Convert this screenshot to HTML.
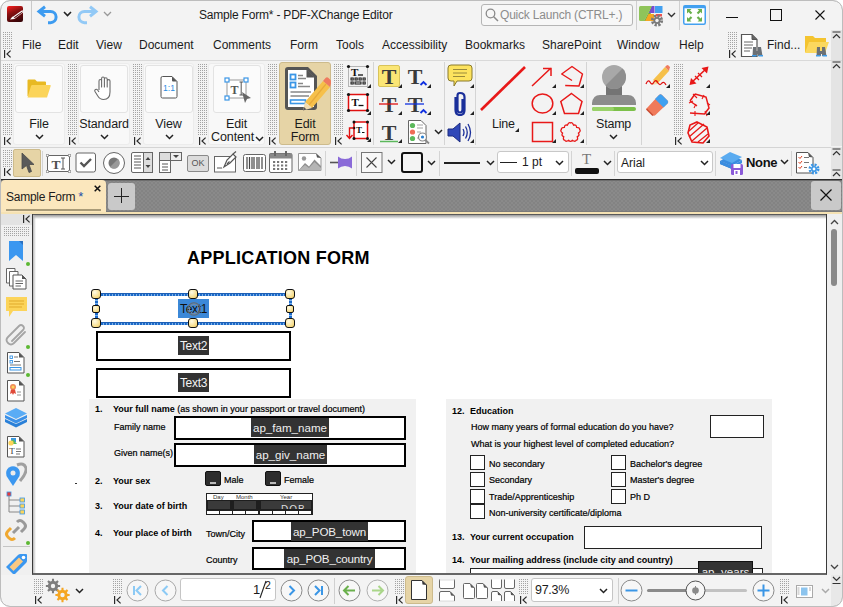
<!DOCTYPE html>
<html><head><meta charset="utf-8">
<style>
*{margin:0;padding:0;box-sizing:border-box}
html,body{width:843px;height:607px;overflow:hidden;background:#fff}
body{font-family:"Liberation Sans",sans-serif;font-size:12px;color:#1a1a1a;position:relative}
.a{position:absolute}
.win{left:0;top:0;width:843px;height:607px;background:#f3f3f3;border:1px solid #bdbdbd;border-radius:8px;overflow:hidden}
.grip{position:absolute;width:10px;background-image:conic-gradient(from 270deg at 1px 1px,#a3a3a3 90deg,transparent 0);background-size:2px 2px}
.kk{position:absolute;width:8px;height:8px}
.sep{position:absolute;width:1px;background:#d6d6d6}
.menu span{position:absolute;top:38px;font-size:12px;color:#1b1b1b;white-space:nowrap}
.rbtn{position:absolute;background:#fbfbfb;border:1px solid #e3e3e3;border-radius:3px}
.rlab{position:absolute;text-align:center;font-size:12.5px;color:#1b1b1b;line-height:13px}
.tb{position:absolute;top:148px;height:31px}
.t9{font-size:9px;color:#000;-webkit-text-stroke:0.2px #000;white-space:nowrap;line-height:11px;margin-top:1px}
.b,.t9 b{font-weight:bold;-webkit-text-stroke:0}
.box{border:2px solid #000;background:#fff}
.cb{width:15px;height:15px;border:1.5px solid #222;background:#fff}
.lbl{background:#333;color:#f4f4f4;font-size:12px;line-height:21px;text-align:center;letter-spacing:-0.3px}
.lbl2{background:#333;color:#f0f0f0;font-size:11.6px;line-height:19px;text-align:center;white-space:nowrap;letter-spacing:0px}
.hd{width:10px;height:10px;border:1.3px solid #111;border-radius:3px;background:radial-gradient(circle at 35% 30%,#fffbe5,#f7dc86 70%,#e9c45a)}
.hs{width:8px;height:8px;border-radius:2px}
</style></head><body>
<div class="a win"></div>
<!-- ===== TITLE BAR ===== -->
<div id="title">
<!-- app icon -->
<svg class="a" style="left:7px;top:6px" width="17" height="17" viewBox="0 0 17 17">
<defs><linearGradient id="ag" x1="0.2" y1="0" x2="0.6" y2="1"><stop offset="0" stop-color="#f01e1e"/><stop offset="0.4" stop-color="#8a1010"/><stop offset="1" stop-color="#3a0508"/></linearGradient></defs>
<rect x="0" y="0" width="16" height="16" rx="2" fill="url(#ag)"/>
<path d="M5.5 11 L15.5 4 L16 6.5 L7.5 13 Z" fill="#fff"/>
<path d="M7 11.3 L15 5.7 L15.3 6.6 L7.6 12.2 Z" fill="#5a0a0e"/>
<path d="M3 13.5 L5.5 10.5 L7.5 13 Z" fill="#fff"/>
</svg>
<div class="sep" style="left:31px;top:1px;height:29px;background:#c9c9c9"></div>
<!-- undo -->
<svg class="a" style="left:36px;top:5px" width="23" height="21" viewBox="0 0 23 21">
<path d="M9 1.8 L3 6.5 L9 11.2" fill="none" stroke="#3d9bf0" stroke-width="3" stroke-linejoin="miter" stroke-linecap="butt"/>
<path d="M3.5 6.5 H14.5 A5.6 5.6 0 0 1 14.5 17.7 H12" fill="none" stroke="#3d9bf0" stroke-width="3"/>
</svg>
<svg class="a" style="left:63px;top:11px" width="9" height="6" viewBox="0 0 9 6"><path d="M1 1 L4.5 4.5 L8 1" fill="none" stroke="#222" stroke-width="1.6"/></svg>
<svg class="a" style="left:76px;top:5px" width="23" height="21" viewBox="0 0 23 21">
<path d="M14 1.8 L20 6.5 L14 11.2" fill="none" stroke="#92c9f6" stroke-width="3" stroke-linejoin="miter" stroke-linecap="butt"/>
<path d="M19.5 6.5 H8.5 A5.6 5.6 0 0 0 8.5 17.7 H11" fill="none" stroke="#92c9f6" stroke-width="3"/>
</svg>
<svg class="a" style="left:103px;top:11px" width="9" height="6" viewBox="0 0 9 6"><path d="M1 1 L4.5 4.5 L8 1" fill="none" stroke="#999" stroke-width="1.3"/></svg>
<div class="a" style="left:199px;top:8px;font-size:12px;letter-spacing:-0.2px;color:#1b1b1b;white-space:nowrap">Sample Form* - PDF-XChange Editor</div>
<!-- quick launch -->
<div class="a" style="left:481px;top:4px;width:152px;height:22px;border:1px solid #b5b5b5;border-radius:3px;background:#f7f7f7"></div>
<svg class="a" style="left:485px;top:8px" width="14" height="14" viewBox="0 0 14 14"><circle cx="5.5" cy="5.5" r="4.3" fill="none" stroke="#8a8a8a" stroke-width="1.3"/><path d="M8.7 8.7 L13 13" stroke="#8a8a8a" stroke-width="1.5"/></svg>
<div class="a" style="left:500px;top:8px;font-size:12px;letter-spacing:-0.2px;color:#8c8c8c;white-space:nowrap">Quick Launch (CTRL+.)</div>
<div class="sep" style="left:636px;top:1px;height:29px;background:#d0d0d0"></div>
<svg class="a" style="left:638px;top:5px" width="30" height="23" viewBox="0 0 30 23">
<path d="M2.5 1 H14 L6 16 H2.5 Q1 16 1 14.5 V2.5 Q1 1 2.5 1 Z" fill="#8fc45a"/>
<path d="M14 1 L6 16 H9 L14 6 Z" fill="#6fae3a"/>
<path d="M14 1 H16.5 V8 H11 Z" fill="#7a4ad0"/>
<rect x="17" y="1" width="7.5" height="7" fill="#42a0f0"/>
<path d="M10.5 9 H16 V16 H7 Z" fill="#f5a623"/>
<rect x="18" y="9" width="6" height="2.5" fill="#ef5350"/>
<g transform="translate(19 15.5)"><circle r="4.6" fill="none" stroke="#7a7a7a" stroke-width="3" stroke-dasharray="2.2 1.4"/><circle r="3.5" fill="#7a7a7a"/><circle r="1.7" fill="#f3f3f3"/></g>
</svg>
<svg class="a" style="left:667px;top:12px" width="9" height="6" viewBox="0 0 9 6"><path d="M1 1 L4.5 4.5 L8 1" fill="none" stroke="#333" stroke-width="1.4"/></svg>
<div class="sep" style="left:679px;top:1px;height:29px;background:#d0d0d0"></div>
<svg class="a" style="left:683px;top:5px" width="23" height="20" viewBox="0 0 23 20">
<rect x="0.75" y="0.75" width="21.5" height="18.5" rx="1.5" fill="#fff" stroke="#42a0f0" stroke-width="1.5"/>
<rect x="0.75" y="0.75" width="21.5" height="2.5" fill="#42a0f0"/>
<path d="M8.5 8.5 L5 5 M14.5 8.5 L18 5 M8.5 12 L5 15.5 M14.5 12 L18 15.5" stroke="#6ab04c" stroke-width="2.2"/>
<path d="M4 4 H8.5 L4 8.5 Z M19 4 H14.5 L19 8.5 Z M4 16.5 H8.5 L4 12 Z M19 16.5 H14.5 L19 12 Z" fill="#6ab04c"/>
</svg>
<div class="sep" style="left:709px;top:1px;height:29px;background:#d0d0d0"></div>
<div class="a" style="left:726px;top:17px;width:12px;height:1px;background:#111"></div>
<div class="a" style="left:770px;top:9px;width:12px;height:12px;border:1px solid #111"></div>
<svg class="a" style="left:815px;top:10px" width="10" height="10" viewBox="0 0 10 10"><path d="M0.5 0.5 L9.5 9.5 M9.5 0.5 L0.5 9.5" stroke="#111" stroke-width="1.1"/></svg>
</div>
<!-- ===== MENU BAR ===== -->
<div id="menubar" class="menu">
<div class="grip" style="left:3px;top:32px;height:17px"></div>
<svg class="kk" style="left:4px;top:50px" viewBox="0 0 8 8"><path d="M0.6 0 V8 M6.6 0.6 L3 4 L6.6 7.4" fill="none" stroke="#2a2a2a" stroke-width="1.2"/></svg>
<span style="left:22px">File</span><span style="left:58px">Edit</span><span style="left:96px">View</span><span style="left:139px">Document</span><span style="left:213px">Comments</span><span style="left:290px">Form</span><span style="left:336px">Tools</span><span style="left:382px">Accessibility</span><span style="left:465px">Bookmarks</span><span style="left:542px">SharePoint</span><span style="left:617px">Window</span><span style="left:679px">Help</span>
<div class="grip" style="left:728px;top:32px;height:17px"></div>
<svg class="kk" style="left:729px;top:50px" viewBox="0 0 8 8"><path d="M0.6 0 V8 M6.6 0.6 L3 4 L6.6 7.4" fill="none" stroke="#2a2a2a" stroke-width="1.2"/></svg>
<svg class="a" style="left:740px;top:33px" width="26" height="25" viewBox="0 0 26 25">
<path d="M1.5 1.5 H12 L17 6.5 V23.5 H1.5 Z" fill="#fff" stroke="#555" stroke-width="1.2"/>
<path d="M12 1.5 V6.5 H17" fill="#666" stroke="#555"/>
<path d="M4 9 H13 M4 12 H13 M4 15 H12 M4 18 H10" stroke="#666" stroke-width="1"/>
<path d="M13 14 h3 v4 h2 v-4 h3 l1.5 9 h-4.5 v-2 h-1 v2 h-4.5 z" fill="#6b7075"/>
<rect x="12" y="22" width="4.5" height="1.5" fill="#3f9be8"/><rect x="18.5" y="22" width="4.5" height="1.5" fill="#3f9be8"/>
</svg>
<span style="left:767px">Find...</span>
<svg class="a" style="left:804px;top:33px" width="26" height="25" viewBox="0 0 26 25">
<path d="M1 3 H9 L11 5 H22 V19 H1 Z" fill="#f4c430"/>
<path d="M1 20 L5 9 H25 L21 20 Z" fill="#fbd85f"/>
<path d="M13 14 h3 v4 h2 v-4 h3 l1.5 9 h-4.5 v-2 h-1 v2 h-4.5 z" fill="#6b7075"/>
<rect x="12" y="22" width="4.5" height="1.5" fill="#3f9be8"/><rect x="18.5" y="22" width="4.5" height="1.5" fill="#3f9be8"/>
</svg>
<div class="a" style="left:831px;top:30px;width:11px;height:30px;background:#e4e4e4"></div>
<svg class="a" style="left:832px;top:31px" width="9" height="8" viewBox="0 0 9 8"><path d="M0.5 1 H8.5 M1 7 L4.5 3.5 L8 7" fill="none" stroke="#333" stroke-width="1.2"/></svg>
</div>
<!-- line under menu -->
<div class="a" style="left:1px;top:60px;width:841px;height:1px;background:#d9d9d9"></div>
<!-- ===== RIBBON ===== -->
<div id="ribbon">
<div class="grip" style="left:3px;top:64px;height:71px"></div><svg class="kk" style="left:4px;top:137px" viewBox="0 0 8 8"><path d="M0.6 0 V8 M6.6 0.6 L3 4 L6.6 7.4" fill="none" stroke="#2a2a2a" stroke-width="1.2"/></svg>
<div class="grip" style="left:68px;top:64px;height:71px"></div><svg class="kk" style="left:69px;top:137px" viewBox="0 0 8 8"><path d="M0.6 0 V8 M6.6 0.6 L3 4 L6.6 7.4" fill="none" stroke="#2a2a2a" stroke-width="1.2"/></svg>
<div class="grip" style="left:133px;top:64px;height:71px"></div><svg class="kk" style="left:134px;top:137px" viewBox="0 0 8 8"><path d="M0.6 0 V8 M6.6 0.6 L3 4 L6.6 7.4" fill="none" stroke="#2a2a2a" stroke-width="1.2"/></svg>
<div class="grip" style="left:198px;top:64px;height:71px"></div><svg class="kk" style="left:199px;top:137px" viewBox="0 0 8 8"><path d="M0.6 0 V8 M6.6 0.6 L3 4 L6.6 7.4" fill="none" stroke="#2a2a2a" stroke-width="1.2"/></svg>
<div class="grip" style="left:268px;top:64px;height:71px"></div><svg class="kk" style="left:269px;top:137px" viewBox="0 0 8 8"><path d="M0.6 0 V8 M6.6 0.6 L3 4 L6.6 7.4" fill="none" stroke="#2a2a2a" stroke-width="1.2"/></svg>
<div class="grip" style="left:334px;top:64px;height:71px"></div><svg class="kk" style="left:335px;top:137px" viewBox="0 0 8 8"><path d="M0.6 0 V8 M6.6 0.6 L3 4 L6.6 7.4" fill="none" stroke="#2a2a2a" stroke-width="1.2"/></svg>
<div class="grip" style="left:674px;top:64px;height:71px"></div><svg class="kk" style="left:675px;top:137px" viewBox="0 0 8 8"><path d="M0.6 0 V8 M6.6 0.6 L3 4 L6.6 7.4" fill="none" stroke="#2a2a2a" stroke-width="1.2"/></svg>
<div class="a" style="left:13px;top:63px;width:52px;height:82px;background:#f8f8f8;border:1px solid #ececec;border-radius:3px"></div><div class="rbtn" style="left:15px;top:65px;width:48px;height:48px"></div><svg class="a" style="left:27px;top:79px" width="24" height="19" viewBox="0 0 24 19">
<path d="M0.5 1.5 Q0.5 0.5 1.5 0.5 H8 L10 2.5 H18 Q19 2.5 19 3.5 V17 H0.5 Z" fill="#e8b923"/>
<path d="M0.5 18.5 L4 7 Q4.3 6 5.3 6 H23 Q24 6 23.7 7 L20 18.5 Z" fill="#fbd45a"/>
</svg><div class="rlab" style="left:13px;top:118px;width:52px;letter-spacing:-0.15px">File</div><svg class="a" style="left:35px;top:134px" width="9" height="6" viewBox="0 0 9 6"><path d="M1 1 L4.5 4.5 L8 1" fill="none" stroke="#222" stroke-width="1.5"/></svg><div class="a" style="left:78px;top:63px;width:52px;height:82px;background:#f8f8f8;border:1px solid #ececec;border-radius:3px"></div><div class="rbtn" style="left:80px;top:65px;width:48px;height:48px"></div><svg class="a" style="left:94px;top:76px" width="20" height="25" viewBox="0 0 20 25">
<path d="M5 14 V5 Q5 3.5 6.3 3.5 Q7.6 3.5 7.6 5 V11 V2.5 Q7.6 1 9 1 Q10.4 1 10.4 2.5 V11 V3.2 Q10.4 1.8 11.8 1.8 Q13.2 1.8 13.2 3.2 V11 V5 Q13.2 3.6 14.6 3.6 Q16 3.6 16 5 V16 Q16 23.5 9.5 23.5 Q6 23.5 3.8 20 L1 15.5 Q0.3 14 1.5 13.4 Q2.7 12.8 3.6 14 L5 16" fill="#fff" stroke="#6b6b6b" stroke-width="1.1" stroke-linejoin="round"/>
</svg><div class="rlab" style="left:78px;top:118px;width:52px;letter-spacing:-0.15px">Standard</div><svg class="a" style="left:100px;top:134px" width="9" height="6" viewBox="0 0 9 6"><path d="M1 1 L4.5 4.5 L8 1" fill="none" stroke="#222" stroke-width="1.5"/></svg><div class="a" style="left:143px;top:63px;width:51px;height:82px;background:#f8f8f8;border:1px solid #ececec;border-radius:3px"></div><div class="rbtn" style="left:145px;top:65px;width:48px;height:48px"></div><svg class="a" style="left:160px;top:76px" width="18" height="23" viewBox="0 0 18 23">
<path d="M2.5 0.5 H12 L17 5.5 V20.5 Q17 22 15.5 22 H2.5 Q1 22 1 20.5 V2 Q1 0.5 2.5 0.5 Z" fill="#fff" stroke="#555" stroke-width="1"/>
<path d="M12 0.5 L17 5.5 H13 Q12 5.5 12 4.5 Z" fill="#555"/>
<text x="9" y="14.5" font-family="Liberation Sans" font-size="8.5" fill="#2a8ae0" text-anchor="middle">1:1</text>
</svg><div class="rlab" style="left:143px;top:118px;width:51px;letter-spacing:-0.15px">View</div><svg class="a" style="left:165px;top:134px" width="9" height="6" viewBox="0 0 9 6"><path d="M1 1 L4.5 4.5 L8 1" fill="none" stroke="#222" stroke-width="1.5"/></svg><div class="a" style="left:208px;top:63px;width:57px;height:82px;background:#f8f8f8;border:1px solid #ececec;border-radius:3px"></div><div class="rbtn" style="left:213px;top:65px;width:48px;height:48px"></div><svg class="a" style="left:224px;top:77px" width="30" height="26" viewBox="0 0 30 26">
<rect x="3" y="3" width="19" height="18" fill="#fff" stroke="#9a9a9a" stroke-width="1"/>
<rect x="1" y="1" width="4" height="4" fill="#fff" stroke="#3a96e6" stroke-width="1.2"/>
<rect x="20" y="1" width="4" height="4" fill="#fff" stroke="#3a96e6" stroke-width="1.2"/>
<rect x="1" y="19" width="4" height="4" fill="#fff" stroke="#3a96e6" stroke-width="1.2"/>
<text x="10.5" y="17" font-family="Liberation Serif" font-weight="bold" font-size="12" fill="#555" text-anchor="middle">T</text>
<path d="M15.5 5 H19 M17.2 5 V18 M15.5 18 H19" stroke="#555" stroke-width="1"/>
<path d="M18 15 L27 21 L23 22 L21 26 Z" fill="#666"/>
</svg><div class="rlab" style="left:208px;top:118px;width:57px;letter-spacing:-0.15px">Edit</div><div class="rlab" style="left:211px;top:131px;white-space:nowrap;letter-spacing:-0.1px">Content</div><svg class="a" style="left:255px;top:136px" width="9" height="6" viewBox="0 0 9 6"><path d="M1 1 L4.5 4.5 L8 1" fill="none" stroke="#222" stroke-width="1.5"/></svg><div class="a" style="left:279px;top:62px;width:52px;height:83px;background:#e6d4a6;border:1px solid #cdbb8c;border-radius:3px"></div><svg class="a" style="left:283px;top:66px" width="48" height="46" viewBox="0 0 48 46">
<path d="M2 4 Q2 1 5 1 H25 L34 10 V41 Q34 44 31 44 H5 Q2 44 2 41 Z" fill="#555"/>
<path d="M5 4 H24 L31 11 V41 H5 Z" fill="#fff"/>
<path d="M23.5 3 L32 11.5 H23.5 Z" fill="#555"/>
<rect x="7.5" y="8.5" width="5" height="5" fill="none" stroke="#3a96e6" stroke-width="1.8"/>
<rect x="7.5" y="16.5" width="5" height="5" fill="none" stroke="#3a96e6" stroke-width="1.8"/>
<path d="M15 9.5 H20 M15 12.5 H23 M15 17.5 H20 M15 20.5 H27 M7.5 26 H28 M7.5 30 H26" stroke="#888" stroke-width="1.6"/>
<rect x="7.5" y="34" width="15" height="3.5" fill="none" stroke="#3a96e6" stroke-width="1.6"/>
<path d="M22 36 L40 15 L47 21 L29 42 Z" fill="#f6c04a"/>
<path d="M26 39 L43 18" stroke="#e8a93a" stroke-width="1.2"/>
<path d="M40 15 L42.5 12 Q44 10.5 45.5 12 L48 14.5 Q49.5 16 48 17.5 L47 21 Z" fill="#ef7b5f"/>
<path d="M22 36 L29 42 L20 44.5 Z" fill="#f2dcb0"/><path d="M20 44.5 L21 41 L23.5 43.5 Z" fill="#555"/>
</svg><div class="rlab" style="left:279px;top:118px;width:52px;letter-spacing:-0.15px">Edit</div><div class="rlab" style="left:279px;top:131px;width:52px;letter-spacing:-0.15px">Form</div>
<svg class="a" style="left:346px;top:64px" width="25" height="25" viewBox="0 0 25 25">
<rect x="2.5" y="2.5" width="19" height="20" fill="none" stroke="#555" stroke-width="0.8" stroke-dasharray="1 1"/>
<circle cx="2.5" cy="2.5" r="1.6" fill="#111"/><circle cx="21.5" cy="2.5" r="1.6" fill="#111"/>
<text x="5" y="12" font-family="Liberation Serif" font-weight="bold" font-size="11" fill="#111">T</text><path d="M12 11 H17" stroke="#111" stroke-width="1.3"/>
<g fill="none" stroke="#111" stroke-width="1"><rect x="5" y="14" width="2.2" height="2"/><rect x="9" y="14" width="2.2" height="2"/><rect x="13" y="14" width="2.2" height="2"/><rect x="17" y="14" width="2.2" height="2"/><rect x="5" y="18" width="2.2" height="2"/><rect x="9" y="18" width="6" height="2"/><rect x="17" y="18" width="2.2" height="2"/></g>
</svg><svg class="a" style="left:367px;top:84px" width="4" height="4" viewBox="0 0 4 4"><path d="M4 0 V4 H0 Z" fill="#222"/></svg><svg class="a" style="left:346px;top:92px" width="25" height="22" viewBox="0 0 25 22">
<rect x="2.5" y="2.5" width="19" height="16" fill="#fff" stroke="#e01010" stroke-width="1.5"/>
<circle cx="2.5" cy="2.5" r="1.6" fill="#111"/><circle cx="21.5" cy="2.5" r="1.6" fill="#111"/><circle cx="2.5" cy="18.5" r="1.6" fill="#111"/><circle cx="21.5" cy="18.5" r="1.6" fill="#111"/>
<text x="5.5" y="14" font-family="Liberation Serif" font-weight="bold" font-size="11" fill="#111">T</text><path d="M12.5 13.5 H17.5" stroke="#111" stroke-width="1.3"/>
</svg><svg class="a" style="left:367px;top:111px" width="4" height="4" viewBox="0 0 4 4"><path d="M4 0 V4 H0 Z" fill="#222"/></svg><svg class="a" style="left:345px;top:120px" width="26" height="22" viewBox="0 0 26 22">
<rect x="9" y="2" width="13.5" height="16.5" fill="#fff" stroke="#e01010" stroke-width="1.5"/>
<circle cx="9" cy="2" r="1.5" fill="#111"/><circle cx="22.5" cy="2" r="1.5" fill="#111"/><circle cx="9" cy="18.5" r="1.5" fill="#111"/><circle cx="22.5" cy="18.5" r="1.5" fill="#111"/><circle cx="9" cy="8" r="1.3" fill="#111"/>
<text x="11" y="13" font-family="Liberation Serif" font-weight="bold" font-size="9" fill="#111">T</text><path d="M17 12.5 H19.5" stroke="#111" stroke-width="1"/>
<path d="M8.5 8 H4.5 V18 M1.5 15 L4.5 18.5 L7.5 15" fill="none" stroke="#e01010" stroke-width="1.4"/>
</svg><svg class="a" style="left:367px;top:138px" width="4" height="4" viewBox="0 0 4 4"><path d="M4 0 V4 H0 Z" fill="#222"/></svg><div class="sep" style="left:373px;top:62px;height:83px;background:#d4d4d4"></div><div class="a" style="left:378px;top:65px;width:22px;height:22px;background:#fbe675;border:1px solid #d8c35a;border-radius:2px"></div>
<svg class="a" style="left:378px;top:65px" width="22" height="22" viewBox="0 0 22 22"><text x="11" y="19" font-family="Liberation Serif" font-size="22" fill="#3a3a3a" text-anchor="middle" font-weight="bold">T</text></svg><svg class="a" style="left:398px;top:84px" width="4" height="4" viewBox="0 0 4 4"><path d="M4 0 V4 H0 Z" fill="#222"/></svg><svg class="a" style="left:378px;top:93px" width="22" height="22" viewBox="0 0 22 22"><text x="11" y="19" font-family="Liberation Serif" font-size="22" fill="#3a3a3a" text-anchor="middle" font-weight="bold">T</text><path d="M1 11 H20" stroke="#e01010" stroke-width="1.3"/></svg><svg class="a" style="left:398px;top:111px" width="4" height="4" viewBox="0 0 4 4"><path d="M4 0 V4 H0 Z" fill="#222"/></svg><svg class="a" style="left:378px;top:121px" width="22" height="22" viewBox="0 0 22 22"><text x="11" y="19" font-family="Liberation Serif" font-size="22" fill="#3a3a3a" text-anchor="middle" font-weight="bold">T</text><path d="M2 20.5 H20" stroke="#5cb85c" stroke-width="1.5"/></svg><svg class="a" style="left:398px;top:139px" width="4" height="4" viewBox="0 0 4 4"><path d="M4 0 V4 H0 Z" fill="#222"/></svg><svg class="a" style="left:405px;top:65px" width="24" height="22" viewBox="0 0 24 22"><text x="10" y="19" font-family="Liberation Serif" font-size="22" fill="#3a3a3a" text-anchor="middle" font-weight="bold">T</text><path d="M15.5 20 L18.5 17 L21.5 20" fill="none" stroke="#1030e0" stroke-width="1.8"/></svg><svg class="a" style="left:427px;top:84px" width="4" height="4" viewBox="0 0 4 4"><path d="M4 0 V4 H0 Z" fill="#222"/></svg><svg class="a" style="left:405px;top:93px" width="24" height="22" viewBox="0 0 24 22"><text x="10" y="19" font-family="Liberation Serif" font-size="22" fill="#3a3a3a" text-anchor="middle" font-weight="bold">T</text><path d="M0 11 H19" stroke="#1030e0" stroke-width="1.3"/><path d="M15.5 20 L18.5 17 L21.5 20" fill="none" stroke="#1030e0" stroke-width="1.8"/></svg><svg class="a" style="left:427px;top:111px" width="4" height="4" viewBox="0 0 4 4"><path d="M4 0 V4 H0 Z" fill="#222"/></svg><svg class="a" style="left:407px;top:120px" width="24" height="25" viewBox="0 0 24 25">
<path d="M1.5 0.5 H14 L19 5.5 V23.5 H1.5 Z" fill="#fff" stroke="#666" stroke-width="1"/>
<circle cx="5.5" cy="5.5" r="2.6" fill="#5cb85c"/><circle cx="5.5" cy="12" r="2.6" fill="#ef6c57"/><circle cx="5.5" cy="18.5" r="2.6" fill="#5cb85c"/>
<path d="M10 5 H16 M10 8 H16 M10 12 H14 M10 18 H12" stroke="#999" stroke-width="0.9"/>
<circle cx="15.5" cy="17" r="4" fill="#fff" stroke="#888" stroke-width="1.2"/><circle cx="15.5" cy="17" r="1.6" fill="#2a7fd0"/>
<path d="M18.3 19.8 L22 23.5" stroke="#888" stroke-width="1.8"/>
</svg><svg class="a" style="left:434px;top:129px" width="9" height="6" viewBox="0 0 9 6"><path d="M1 1 L4.5 4.5 L8 1" fill="none" stroke="#222" stroke-width="1.5"/></svg><div class="sep" style="left:444px;top:62px;height:83px;background:#d4d4d4"></div><svg class="a" style="left:447px;top:64px" width="26" height="24" viewBox="0 0 26 24">
<path d="M4 1 H22 Q25 1 25 4 V14 Q25 17 22 17 H10 L7 22 L7 17 H4 Q1 17 1 14 V4 Q1 1 4 1 Z" fill="#fde35e" stroke="#8a7a2a" stroke-width="1"/>
<path d="M6 5.5 H20 M6 9 H20 M6 12.5 H18" stroke="#9a8a3a" stroke-width="1"/>
</svg><svg class="a" style="left:470px;top:84px" width="4" height="4" viewBox="0 0 4 4"><path d="M4 0 V4 H0 Z" fill="#222"/></svg><svg class="a" style="left:453px;top:91px" width="14" height="25" viewBox="0 0 14 25">
<path d="M9.5 8 V18.5 Q9.5 21.5 7 21.5 Q4.5 21.5 4.5 18.5 V4.5 Q4.5 2 7 2 Q11.5 2 11.5 6 V19 Q11.5 24 7 24 Q2.5 24 2.5 19 V6" fill="none" stroke="#1a2f9a" stroke-width="2.2"/>
</svg><svg class="a" style="left:470px;top:111px" width="4" height="4" viewBox="0 0 4 4"><path d="M4 0 V4 H0 Z" fill="#222"/></svg><svg class="a" style="left:447px;top:121px" width="26" height="23" viewBox="0 0 26 23">
<path d="M1 8 H6 L13 2 V21 L6 15 H1 Z" fill="#3048b8" stroke="#1a2a80" stroke-width="1"/>
<path d="M16 8 Q18 11.5 16 15 M18.5 5.5 Q22 11.5 18.5 17.5 M21 3 Q26 11.5 21 20" fill="none" stroke="#1a2f9a" stroke-width="1.3"/>
</svg><svg class="a" style="left:470px;top:139px" width="4" height="4" viewBox="0 0 4 4"><path d="M4 0 V4 H0 Z" fill="#222"/></svg><div class="sep" style="left:475px;top:62px;height:83px;background:#d4d4d4"></div><svg class="a" style="left:478px;top:64px" width="50" height="50" viewBox="0 0 50 50"><path d="M3 46 L47 3" stroke="#e81818" stroke-width="2.6"/></svg><div class="rlab" style="left:492px;top:118px;white-space:nowrap;letter-spacing:-0.2px">Line</div><svg class="a" style="left:515px;top:128px" width="4" height="4" viewBox="0 0 4 4"><path d="M4 0 V4 H0 Z" fill="#222"/></svg><svg class="a" style="left:530px;top:65px" width="24" height="24" viewBox="0 0 24 24"><path d="M2 21 L21 3 M13 3.5 H21 V11" fill="none" stroke="#e81818" stroke-width="1.5"/></svg><svg class="a" style="left:552px;top:84px" width="4" height="4" viewBox="0 0 4 4"><path d="M4 0 V4 H0 Z" fill="#222"/></svg><svg class="a" style="left:559px;top:64px" width="26" height="25" viewBox="0 0 26 25"><path d="M6.2 21.5 L20 22 L23.5 10 L13 2.5 L2.7 10 L13 16.5" fill="none" stroke="#e81818" stroke-width="1.4" stroke-linejoin="round"/></svg><svg class="a" style="left:580px;top:84px" width="4" height="4" viewBox="0 0 4 4"><path d="M4 0 V4 H0 Z" fill="#222"/></svg><svg class="a" style="left:530px;top:92px" width="25" height="24" viewBox="0 0 25 24"><ellipse cx="12.5" cy="11.5" rx="10.3" ry="9.6" fill="none" stroke="#e81818" stroke-width="1.5"/></svg><svg class="a" style="left:552px;top:111px" width="4" height="4" viewBox="0 0 4 4"><path d="M4 0 V4 H0 Z" fill="#222"/></svg><svg class="a" style="left:559px;top:92px" width="25" height="24" viewBox="0 0 25 24"><path d="M12.5 1.5 L23 9.5 L19.5 21.5 H5.5 L1.8 9.5 Z" fill="none" stroke="#e81818" stroke-width="1.5"/></svg><svg class="a" style="left:580px;top:111px" width="4" height="4" viewBox="0 0 4 4"><path d="M4 0 V4 H0 Z" fill="#222"/></svg><svg class="a" style="left:531px;top:121px" width="24" height="23" viewBox="0 0 24 23"><rect x="1.5" y="1.5" width="20" height="19" fill="none" stroke="#e81818" stroke-width="1.5"/></svg><svg class="a" style="left:552px;top:139px" width="4" height="4" viewBox="0 0 4 4"><path d="M4 0 V4 H0 Z" fill="#222"/></svg><svg class="a" style="left:558px;top:120px" width="26" height="25" viewBox="0 0 26 25"><path d="M12.50 2.90 Q14.41 1.84 15.54 5.11 Q18.36 4.44 18.59 7.32 Q22.05 7.39 21.63 9.53 Q23.23 11.02 20.47 13.11 Q21.98 15.58 19.31 16.69 Q20.31 20.00 18.14 20.27 Q17.22 22.25 14.38 20.27 Q12.50 22.47 10.62 20.27 Q7.78 22.25 6.86 20.27 Q4.69 20.00 5.69 16.69 Q3.02 15.58 4.53 13.11 Q1.77 11.02 3.37 9.53 Q2.95 7.39 6.41 7.32 Q6.64 4.44 9.46 5.11 Q10.59 1.84 12.50 2.90 Z" fill="none" stroke="#e81818" stroke-width="1.3"/></svg><svg class="a" style="left:580px;top:139px" width="4" height="4" viewBox="0 0 4 4"><path d="M4 0 V4 H0 Z" fill="#222"/></svg><div class="sep" style="left:586px;top:62px;height:83px;background:#d4d4d4"></div><svg class="a" style="left:591px;top:64px" width="46" height="48" viewBox="0 0 46 48">
<rect x="15" y="20" width="16" height="11" fill="#747474"/>
<circle cx="23" cy="13" r="12" fill="#a8a8a8"/><path d="M31.5 4.5 A12 12 0 0 1 14.5 21.5 Z" fill="#8e8e8e"/>
<path d="M1 39 Q2 31 9 31 H37 Q44 31 45 39 V41 H1 Z" fill="#8c8c8c"/>
<rect x="1" y="43" width="44" height="4" rx="2" fill="#7cc04a"/><rect x="1" y="43" width="22" height="4" rx="2" fill="#9ad26a"/>
</svg><div class="rlab" style="left:596px;top:118px;white-space:nowrap;letter-spacing:-0.2px">Stamp</div><svg class="a" style="left:609px;top:134px" width="9" height="6" viewBox="0 0 9 6"><path d="M1 1 L4.5 4.5 L8 1" fill="none" stroke="#222" stroke-width="1.5"/></svg><div class="sep" style="left:641px;top:62px;height:83px;background:#d4d4d4"></div><svg class="a" style="left:645px;top:64px" width="25" height="25" viewBox="0 0 25 25">
<path d="M8 16 L20 3 L24 7 L12 20 Z" fill="#f6c04a"/><path d="M20 3 L21.5 1.5 Q22.5 0.5 23.5 1.5 L24.5 2.5 Q25.5 3.5 24.5 4.5 L24 7 Z" fill="#ef7b5f"/>
<path d="M8 16 L12 20 L7 21 Z" fill="#f2dcb0"/>
<path d="M1 20 Q3 15 5 18 Q7 22 9 18 Q11 15 13 19 Q15 22 17 19 Q19 17 21 21" fill="none" stroke="#e01010" stroke-width="1.3"/>
</svg><svg class="a" style="left:666px;top:84px" width="4" height="4" viewBox="0 0 4 4"><path d="M4 0 V4 H0 Z" fill="#222"/></svg><svg class="a" style="left:645px;top:92px" width="25" height="25" viewBox="0 0 25 25">
<path d="M2 16 L14 3 Q15.5 1.5 17 3 L22.5 8.5 Q24 10 22.5 11.5 L10.5 23 Q9 24.5 7.5 23 L2 17.5 Q0.5 16 2 16 Z" fill="#f07a5a"/>
<path d="M14 3 Q15.5 1.5 17 3 L22.5 8.5 Q24 10 22.5 11.5 L18.5 15.5 L10 7 Z" fill="#3fa0f0"/>
<path d="M1.5 17 L8 23.5" stroke="#c84a30" stroke-width="1.5"/>
</svg><svg class="a" style="left:688px;top:65px" width="22" height="22" viewBox="0 0 22 22">
<path d="M3 18 L19 3" stroke="#e81818" stroke-width="1.6"/>
<path d="M1.5 20 L3 13 L8.5 18.5 Z M20.5 1.5 L13.5 3 L19 8.5 Z" fill="#e81818"/>
<path d="M7 11 L11 15 M10 8 L14 12" stroke="#e81818" stroke-width="1.2"/>
</svg><svg class="a" style="left:706px;top:84px" width="4" height="4" viewBox="0 0 4 4"><path d="M4 0 V4 H0 Z" fill="#222"/></svg><svg class="a" style="left:686px;top:92px" width="25" height="25" viewBox="0 0 25 25">
<path d="M9 2 L20 5 L23 16 L18.5 22 L4 21 M11 14 L4 9 Z M4 9 L9 2" fill="none" stroke="#e81818" stroke-width="1.5"/>
<path d="M7 2 L11 6 M18 3 L16 7 M21 11 L24 13 M19 19 L21 24 M9 19 V24 M3 11 L7 9 M10 12 L8 16" stroke="#e81818" stroke-width="1.1"/>
</svg><svg class="a" style="left:706px;top:111px" width="4" height="4" viewBox="0 0 4 4"><path d="M4 0 V4 H0 Z" fill="#222"/></svg><svg class="a" style="left:685px;top:120px" width="26" height="25" viewBox="0 0 26 25">
<path d="M12 2 L22 7 L24 16 L18 23 L7 22 L3 13 L5 5 Z" fill="none" stroke="#e81818" stroke-width="1.6"/>
<path d="M4 11 L13 3 M4 17 L19 4 M7 21 L22 8 M13 22 L23 14" stroke="#e81818" stroke-width="1.3"/>
</svg><svg class="a" style="left:706px;top:139px" width="4" height="4" viewBox="0 0 4 4"><path d="M4 0 V4 H0 Z" fill="#222"/></svg><div class="a" style="left:831px;top:61px;width:11px;height:85px;background:#e4e4e4"></div><svg class="a" style="left:832px;top:61px" width="9" height="8" viewBox="0 0 9 8"><path d="M0.5 1 H8.5 M1 7 L4.5 3.5 L8 7" fill="none" stroke="#333" stroke-width="1.2"/></svg>
</div>
<div class="a" style="left:1px;top:147px;width:841px;height:1px;background:#d4d4d4"></div>
<!-- ===== TOOLBAR ===== -->
<div id="toolbar">
<div class="grip" style="left:3px;top:150px;height:17px"></div><svg class="kk" style="left:4px;top:168px" viewBox="0 0 8 8"><path d="M0.6 0 V8 M6.6 0.6 L3 4 L6.6 7.4" fill="none" stroke="#2a2a2a" stroke-width="1.2"/></svg><div class="a" style="left:13px;top:149px;width:28px;height:28px;background:#e6d4a6;border:1px solid #cdbb8c;border-radius:2px"></div><svg class="a" style="left:21px;top:152px" width="14" height="21" viewBox="0 0 14 21"><path d="M1 1 L13 12.5 L8 12.5 L10.5 19.5 L8 20.5 L5.5 13.5 L1 17 Z" fill="#5a5a5a" stroke="#4a4a4a" stroke-width="0.8" stroke-linejoin="round"/></svg><div class="sep" style="left:42px;top:151px;height:25px;background:#d4d4d4"></div><svg class="a" style="left:46px;top:154px" width="25" height="19" viewBox="0 0 25 19">
<rect x="1.5" y="1.5" width="22" height="16" fill="#fff" stroke="#666" stroke-width="1"/>
<circle cx="1.5" cy="1.5" r="1.3" fill="#fff" stroke="#666" stroke-width="0.8"/><circle cx="23.5" cy="1.5" r="1.3" fill="#fff" stroke="#666" stroke-width="0.8"/><circle cx="1.5" cy="17.5" r="1.3" fill="#fff" stroke="#666" stroke-width="0.8"/><circle cx="23.5" cy="17.5" r="1.3" fill="#fff" stroke="#666" stroke-width="0.8"/>
<text x="10" y="14.5" font-family="Liberation Serif" font-weight="bold" font-size="13.5" fill="#505050" text-anchor="middle">T</text>
<path d="M15 4 H19 M17 4 V15 M15 15 H19" stroke="#555" stroke-width="1"/>
</svg><svg class="a" style="left:75px;top:152px" width="22" height="21" viewBox="0 0 22 21">
<rect x="1" y="1" width="19.5" height="19" rx="2" fill="#fff" stroke="#666" stroke-width="1"/>
<path d="M5.5 10.5 L9 14 L16 7" fill="none" stroke="#555" stroke-width="2.4"/>
</svg><svg class="a" style="left:102px;top:151px" width="24" height="24" viewBox="0 0 24 24">
<circle cx="12" cy="12" r="10.5" fill="#fff" stroke="#666" stroke-width="1"/><circle cx="12" cy="12" r="5.5" fill="#777"/><path d="M8 16 A5.5 5.5 0 0 0 16 8 Z" fill="#999"/>
</svg><svg class="a" style="left:131px;top:152px" width="22" height="21" viewBox="0 0 22 21">
<rect x="0.5" y="0.5" width="21" height="20" rx="1.5" fill="#fff" stroke="#666" stroke-width="1"/>
<rect x="12.5" y="0.5" width="9" height="20" fill="#ddd" stroke="#666" stroke-width="1"/>
<path d="M3 4 H10 M3 7 H10 M3 10 H10 M3 13 H10 M3 16 H10" stroke="#444" stroke-width="0.9"/>
<path d="M14.5 8 L17 5 L19.5 8 Z M14.5 13 L17 16 L19.5 13 Z" fill="#444"/>
</svg><svg class="a" style="left:159px;top:152px" width="23" height="21" viewBox="0 0 23 21">
<rect x="0.5" y="8.5" width="11" height="12" fill="#fff" stroke="#666" stroke-width="1"/>
<rect x="0.5" y="0.5" width="11" height="8" fill="#ddd" stroke="#666" stroke-width="1"/>
<rect x="11.5" y="0.5" width="11" height="8" fill="#eee" stroke="#666" stroke-width="1"/>
<path d="M14 3 L17 6 L20 3 Z" fill="#444"/>
<path d="M3 12 H9 M3 15 H9 M3 18 H9" stroke="#444" stroke-width="0.9"/>
</svg><div class="a" style="left:187px;top:155px;width:22px;height:17px;background:#dcdcdc;border:1px solid #8a8a8a;border-radius:2px;font-size:9px;color:#555;text-align:center;line-height:15px">OK</div><svg class="a" style="left:214px;top:151px" width="24" height="22" viewBox="0 0 24 22">
<rect x="0.5" y="5.5" width="21" height="15.5" fill="#fff" stroke="#666" stroke-width="1"/>
<path d="M3 17 H8" stroke="#555" stroke-width="1"/>
<path d="M10 16 L13 9 L19 3 L22 6 L16 12 Z" fill="#fff" stroke="#555" stroke-width="1.2"/><path d="M19 3 L22 0.5 M13 13 L15.5 10.5" stroke="#555" stroke-width="1.2"/>
</svg><svg class="a" style="left:243px;top:154px" width="23" height="18" viewBox="0 0 23 18">
<rect x="0.5" y="0.5" width="22" height="17" rx="2" fill="#fff" stroke="#666" stroke-width="1"/>
<path d="M4 3 V15 M6.5 3 V15 M9 3 V15 M11 3 V15 M14 3 V15 M16 3 V15 M19 3 V15" stroke="#444" stroke-width="1.2"/>
</svg><svg class="a" style="left:269px;top:151px" width="24" height="22" viewBox="0 0 24 22">
<rect x="0.5" y="2.5" width="22.5" height="19" rx="1.5" fill="#fff" stroke="#666" stroke-width="1"/>
<rect x="0.5" y="2.5" width="22.5" height="5" fill="#888"/>
<rect x="5" y="0" width="2" height="5" fill="#666"/><rect x="16" y="0" width="2" height="5" fill="#666"/>
<g fill="#777"><rect x="4" y="10" width="2.2" height="2"/><rect x="8" y="10" width="2.2" height="2"/><rect x="12" y="10" width="2.2" height="2"/><rect x="16" y="10" width="2.2" height="2"/><rect x="4" y="13.5" width="2.2" height="2"/><rect x="8" y="13.5" width="2.2" height="2"/><rect x="12" y="13.5" width="2.2" height="2"/><rect x="16" y="13.5" width="2.2" height="2"/><rect x="4" y="17" width="2.2" height="2"/><rect x="8" y="17" width="2.2" height="2"/><rect x="12" y="17" width="2.2" height="2"/><rect x="16" y="17" width="2.2" height="2"/></g>
</svg><svg class="a" style="left:298px;top:152px" width="24" height="20" viewBox="0 0 24 20">
<path d="M0.5 1.5 H18 L23 6 V18.5 H0.5 Z" fill="#fff" stroke="#999" stroke-width="1"/>
<circle cx="6" cy="6.5" r="2.2" fill="#999"/>
<path d="M0.5 18.5 L7 11 L11 14.5 L16.5 7.5 L23 14 V18.5 Z" fill="#8f8f8f"/><path d="M0.5 18.5 L7 13 L11 16 L16.5 10 L23 16 V18.5 Z" fill="#b5b5b5"/><path d="M18 1.5 L23 6 L19 5.5 Z" fill="#555"/>
</svg><div class="sep" style="left:325px;top:151px;height:25px;background:#d4d4d4"></div><svg class="a" style="left:329px;top:156px" width="24" height="13" viewBox="0 0 24 13">
<path d="M1 6.5 H10" stroke="#555" stroke-width="1.6"/>
<path d="M9 0.5 Q12 3 16 3 Q20 3 23 0.5 V12.5 Q20 10 16 10 Q12 10 9 12.5 Z" fill="#8a6ad8"/>
</svg><div class="sep" style="left:356px;top:151px;height:25px;background:#d4d4d4"></div><svg class="a" style="left:361px;top:152px" width="22" height="21" viewBox="0 0 22 21">
<rect x="0.5" y="0.5" width="20.5" height="20" fill="#f8f8f8" stroke="#777" stroke-width="1"/>
<path d="M5.5 5.5 L15.5 15.5 M15.5 5.5 L5.5 15.5" stroke="#444" stroke-width="1.1"/>
</svg><svg class="a" style="left:387px;top:159px" width="9" height="6" viewBox="0 0 9 6"><path d="M1 1 L4.5 4.5 L8 1" fill="none" stroke="#222" stroke-width="1.5"/></svg><div class="a" style="left:401px;top:152px;width:22px;height:21px;border:2.2px solid #111;border-radius:3px;background:#f3f3f3"></div><svg class="a" style="left:427px;top:160px" width="9" height="6" viewBox="0 0 9 6"><path d="M1 1 L4.5 4.5 L8 1" fill="none" stroke="#222" stroke-width="1.5"/></svg><div class="sep" style="left:439px;top:151px;height:25px;background:#d4d4d4"></div><div class="a" style="left:444px;top:162px;width:36px;height:1.5px;background:#222"></div><svg class="a" style="left:486px;top:160px" width="9" height="6" viewBox="0 0 9 6"><path d="M1 1 L4.5 4.5 L8 1" fill="none" stroke="#222" stroke-width="1.5"/></svg><div class="a" style="left:497px;top:151px;width:72px;height:22px;background:#fff;border:1px solid #c8c8c8;border-radius:3px"></div><div class="a" style="left:500px;top:161.5px;width:17px;height:1.5px;background:#222"></div><div class="a" style="left:522px;top:155px;font-size:12px;color:#1b1b1b;white-space:nowrap">1 pt</div><svg class="a" style="left:555px;top:160px" width="9" height="6" viewBox="0 0 9 6"><path d="M1 1 L4.5 4.5 L8 1" fill="none" stroke="#222" stroke-width="1.5"/></svg><div class="sep" style="left:571px;top:151px;height:25px;background:#d4d4d4"></div><svg class="a" style="left:579px;top:151px" width="15" height="14" viewBox="0 0 15 14"><text x="7.5" y="13" font-family="Liberation Serif" font-size="15" fill="#777" text-anchor="middle">T</text></svg><div class="a" style="left:575px;top:168px;width:24px;height:6px;background:#111;border-radius:2px"></div><svg class="a" style="left:603px;top:160px" width="9" height="6" viewBox="0 0 9 6"><path d="M1 1 L4.5 4.5 L8 1" fill="none" stroke="#222" stroke-width="1.5"/></svg><div class="sep" style="left:614px;top:151px;height:25px;background:#d4d4d4"></div><div class="a" style="left:617px;top:151px;width:96px;height:22px;background:#fff;border:1px solid #c8c8c8;border-radius:3px"></div><div class="a" style="left:621px;top:156px;font-size:12px;color:#1b1b1b;white-space:nowrap">Arial</div><svg class="a" style="left:700px;top:160px" width="9" height="6" viewBox="0 0 9 6"><path d="M1 1 L4.5 4.5 L8 1" fill="none" stroke="#222" stroke-width="1.5"/></svg><div class="sep" style="left:715px;top:151px;height:25px;background:#d4d4d4"></div><svg class="a" style="left:719px;top:151px" width="26" height="25" viewBox="0 0 26 25">
<path d="M1 10 L11 4 L23 9 L13 15 Z" fill="#3a8de0"/><path d="M1 7 L11 1 L23 6 L13 12 Z" fill="#5aabf0"/>
<path d="M1 13 L13 18 V15 L1 10 Z" fill="#2a75c8"/><path d="M1 10 L13 15 L23 9 V12 L13 18 L1 13 Z" fill="#3a8de0"/>
<rect x="12" y="13" width="12" height="11" rx="1.5" fill="#8a5ad8"/><rect x="14.5" y="13" width="7" height="4" fill="#fff"/><rect x="15" y="19" width="6" height="5" fill="#fff"/><rect x="16.5" y="20" width="2" height="3" fill="#8a5ad8"/>
</svg><div class="a" style="left:746px;top:155px;font-size:13px;font-weight:bold;color:#111;white-space:nowrap;letter-spacing:-0.3px">None</div><svg class="a" style="left:780px;top:159px" width="9" height="6" viewBox="0 0 9 6"><path d="M1 1 L4.5 4.5 L8 1" fill="none" stroke="#222" stroke-width="1.5"/></svg><div class="sep" style="left:791px;top:151px;height:25px;background:#d4d4d4"></div><svg class="a" style="left:795px;top:151px" width="26" height="25" viewBox="0 0 26 25">
<path d="M1.5 1.5 H13 L18 6.5 V22 H1.5 Z" fill="#fff" stroke="#555" stroke-width="1"/><path d="M13 1.5 L18 6.5 L14 6 Z" fill="#555"/>
<path d="M3.5 6 L5 7.5 L7 5 M3.5 11 L5 12.5 L7 10 M3.5 16 L5 17.5 L7 15" fill="none" stroke="#e04020" stroke-width="1"/>
<path d="M9 6.5 H14 M9 11.5 H14 M9 16.5 H12" stroke="#777" stroke-width="1"/>
<circle cx="19" cy="18" r="4.2" fill="none" stroke="#3a96e6" stroke-width="2.6" stroke-dasharray="2 1.3"/><circle cx="19" cy="18" r="3" fill="#3a96e6"/><circle cx="19" cy="18" r="1.4" fill="#fff"/>
</svg><div class="a" style="left:831px;top:147px;width:11px;height:32px;background:#e4e4e4"></div><svg class="a" style="left:832px;top:148px" width="9" height="8" viewBox="0 0 9 8"><path d="M0.5 1 H8.5 M1 7 L4.5 3.5 L8 7" fill="none" stroke="#333" stroke-width="1.2"/></svg><svg class="a" style="left:832px;top:169px" width="9" height="8" viewBox="0 0 9 8"><path d="M0.5 1 H8.5 M1 7 L4.5 3.5 L8 7" fill="none" stroke="#333" stroke-width="1.2"/></svg>
</div>
<div class="a" style="left:1px;top:179px;width:841px;height:1px;background:#2b2b2b"></div>
<!-- ===== TAB BAR ===== -->
<div id="tabbar">
<div class="a" style="left:1px;top:180px;width:841px;height:33px;background-color:#8a8a8a;background-image:linear-gradient(45deg,#838383 25%,transparent 25%,transparent 75%,#838383 75%),linear-gradient(45deg,#838383 25%,transparent 25%,transparent 75%,#838383 75%);background-size:4px 4px;background-position:0 0,2px 2px"></div>
<div class="a" style="left:1px;top:180px;width:841px;height:1px;background:#6e6e6e"></div><div class="a" style="left:1px;top:211px;width:841px;height:1px;background:#7a7a7a"></div><div class="a" style="left:1px;top:180px;width:105px;height:33px;background:#fbe7bd;border-radius:4px 4px 0 0"></div>
<div class="a" style="left:6px;top:189px;font-size:12px;letter-spacing:-0.25px;color:#1b1b1b;white-space:nowrap">Sample Form <span style="color:#1a4fa8;font-size:13px">*</span></div>
<svg class="a" style="left:94px;top:185px" width="7" height="7" viewBox="0 0 7 7"><path d="M0.7 0.7 L6.3 6.3 M6.3 0.7 L0.7 6.3" stroke="#111" stroke-width="1.5"/></svg>
<div class="a" style="left:6px;top:209px;width:95px;height:2px;background:#a99b78"></div>
<div class="a" style="left:108px;top:183px;width:27px;height:27px;background:#c9c9c9;border-radius:3px"></div>
<div class="a" style="left:114px;top:195.5px;width:15px;height:1.2px;background:#222"></div>
<div class="a" style="left:121px;top:188px;width:1.2px;height:15px;background:#222"></div>
<div class="a" style="left:811px;top:181px;width:30px;height:29px;background:#c9c9c9;border-radius:3px"></div>
<svg class="a" style="left:820px;top:189px" width="12" height="12" viewBox="0 0 12 12"><path d="M0.5 0.5 L11.5 11.5 M11.5 0.5 L0.5 11.5" stroke="#111" stroke-width="1.2"/></svg>
<div class="a" style="left:1px;top:212px;width:841px;height:2px;background:#f5e2b3"></div>
</div>
<!-- ===== LEFT PANEL ===== -->
<div id="leftpanel">
<div class="a" style="left:1px;top:214px;width:31px;height:361px;background:#f0f0f0"></div>
<div class="a" style="left:1px;top:214px;width:31px;height:11px;background:#e3e3e3"></div>
<svg class="kk" style="left:23px;top:215px" viewBox="0 0 8 8"><path d="M0.6 0 V8 M6.6 0.6 L3 4 L6.6 7.4" fill="none" stroke="#2a2a2a" stroke-width="1.2"/></svg>
<div class="grip" style="left:4px;top:227px;width:26px;height:10px"></div>
<svg class="a" style="left:8px;top:240px" width="17" height="22" viewBox="0 0 17 22"><path d="M1 1 H15 V21 L8 15 L1 21 Z" fill="#3b97f0"/><path d="M11 1 H15 V5 Z" fill="#2a70c0"/></svg>
<div class="a" style="left:26px;top:262px;width:4px;height:4px;border-radius:50%;background:#5cb832"></div>
<svg class="a" style="left:5px;top:267px" width="23" height="23" viewBox="0 0 23 23">
<path d="M1.5 1.5 H10 V16 H1.5 Z" fill="#fff" stroke="#555" stroke-width="0.9"/>
<path d="M4.5 4.5 H13 V19 H4.5 Z" fill="#fff" stroke="#555" stroke-width="0.9"/>
<path d="M8 8 H17 L21 12 V22 H8 Z" fill="#fff" stroke="#555" stroke-width="1"/><path d="M17 8 L21 12 H17 Z" fill="#555"/>
<path d="M10.5 14 H18 M10.5 16.5 H18 M10.5 19 H16" stroke="#555" stroke-width="0.9"/>
</svg>
<svg class="a" style="left:5px;top:296px" width="23" height="23" viewBox="0 0 23 23"><path d="M1 1 H22 V15 H8 L4 21 V15 H1 Z" fill="#fcd45a"/><path d="M4 5 H19 M4 8 H19 M4 11 H17" stroke="#e0a92a" stroke-width="1"/></svg>
<svg class="a" style="left:4px;top:323px" width="24" height="24" viewBox="0 0 24 24"><path d="M8 18 L19 7 Q21 5 19 3 Q17 1 15 3 L4 14 Q1 17 4 20 Q7 23 10 20 L21 9" fill="none" stroke="#a5a5a5" stroke-width="1.8" stroke-linecap="round"/></svg>
<div class="a" style="left:26px;top:345px;width:4px;height:4px;border-radius:50%;background:#5cb832"></div>
<svg class="a" style="left:6px;top:351px" width="19" height="23" viewBox="0 0 19 23"><path d="M1.5 1.5 H13 L18 6.5 V22 H1.5 Z" fill="#fff" stroke="#555" stroke-width="1"/><path d="M13 1.5 L18 6.5 H13 Z" fill="#555"/>
<rect x="4" y="5" width="2.5" height="2.5" fill="none" stroke="#3a96e6" stroke-width="0.9"/><rect x="4" y="9.5" width="2.5" height="2.5" fill="none" stroke="#3a96e6" stroke-width="0.9"/>
<path d="M8 6 H12 M8 10.5 H14 M4 14 H15" stroke="#666" stroke-width="0.9"/><rect x="4" y="16.5" width="11" height="2.5" fill="none" stroke="#3a96e6" stroke-width="1"/></svg>
<div class="a" style="left:26px;top:373px;width:4px;height:4px;border-radius:50%;background:#5cb832"></div>
<svg class="a" style="left:6px;top:379px" width="19" height="23" viewBox="0 0 19 23"><path d="M1.5 1.5 H13 L18 6.5 V22 H1.5 Z" fill="#fff" stroke="#555" stroke-width="1"/><path d="M13 1.5 L18 6.5 H13 Z" fill="#555"/>
<circle cx="7" cy="8" r="3" fill="#f08a5a"/><circle cx="7" cy="8" r="1.5" fill="#fcd45a"/><path d="M5 10.5 L4 15 L6 14 L7 16 L8 14 L10 15 L9 10.5" fill="#e04a3a"/><path d="M11 13 H15 M11 16 H15" stroke="#888" stroke-width="0.9"/></svg>
<svg class="a" style="left:4px;top:407px" width="24" height="22" viewBox="0 0 24 22"><path d="M1 12 L12 17 L23 12 L23 15 L12 20.5 L1 15 Z" fill="#2a80d8"/><path d="M1 8 L12 13 L23 8 L23 11 L12 16.5 L1 11 Z" fill="#3a90e8"/><path d="M12 1 L23 6.5 L12 12 L1 6.5 Z" fill="#5aacf5"/></svg>
<svg class="a" style="left:6px;top:435px" width="19" height="23" viewBox="0 0 19 23"><path d="M1.5 1.5 H13 L18 6.5 V22 H1.5 Z" fill="#fff" stroke="#555" stroke-width="1"/><path d="M13 1.5 L18 6.5 H13 Z" fill="#555"/>
<rect x="5" y="3" width="5" height="4" fill="#3a96e6"/><path d="M7 4 L11 9 H3 Z" fill="#5cb85c"/><circle cx="5" cy="8" r="2.6" fill="#fcd45a"/>
<text x="6" y="19" font-family="Liberation Serif" font-size="9" fill="#333" text-anchor="middle">T</text><path d="M10 14 H15 M10 16.5 H15 M10 19 H14" stroke="#666" stroke-width="0.9"/></svg>
<svg class="a" style="left:5px;top:462px" width="22" height="25" viewBox="0 0 22 25"><path d="M12 3 Q19 0 21 6 Q22 11 15 19" fill="none" stroke="#a0a0a0" stroke-width="3"/><path d="M8 24 L1.5 14 Q0 8 4 5.5 Q8 3 12 5.5 Q16 8 14.5 14 Z" fill="#3b97f0"/><circle cx="8" cy="11" r="2.5" fill="#ebebeb"/></svg>
<svg class="a" style="left:6px;top:491px" width="20" height="24" viewBox="0 0 20 24"><rect x="1" y="1" width="4" height="4" fill="#e83a3a" stroke="#3a96e6" stroke-width="0.8"/><path d="M3 5 V21 M3 9 H15 M3 15 H15 M3 21 H15" stroke="#888" stroke-width="1"/><rect x="14" y="7" width="4.5" height="4" fill="#fcd45a" stroke="#3a96e6" stroke-width="0.8"/><rect x="14" y="13" width="4.5" height="4" fill="#fcd45a" stroke="#3a96e6" stroke-width="0.8"/><rect x="14" y="19" width="4.5" height="4" fill="#fcd45a" stroke="#3a96e6" stroke-width="0.8"/></svg>
<svg class="a" style="left:4px;top:518px" width="24" height="24" viewBox="0 0 24 24"><path d="M13 4 Q16 1 19 4 L20 5 Q23 8 20 11 L17 14" fill="none" stroke="#999" stroke-width="3"/><path d="M11 20 Q8 23 5 20 L4 19 Q1 16 4 13 L7 10" fill="none" stroke="#f0a830" stroke-width="3"/><path d="M9 15 L15 9" stroke="#999" stroke-width="3"/></svg>
<div class="a" style="left:26px;top:541px;width:4px;height:4px;border-radius:50%;background:#5cb832"></div>
<div class="a" style="left:3px;top:546px;width:27px;height:1px;background:#c5c5c5"></div>
<svg class="a" style="left:5px;top:551px" width="23" height="23" viewBox="0 0 23 23"><path d="M1 16 L13 4 Q14 3 15.5 3 H21 Q22 3 22 4 V9.5 Q22 11 21 12 L9 24" fill="#3b97f0"/><path d="M2 16 L8.5 22.5 L21 10 V4 H15 Z" fill="#3b97f0"/><path d="M4.5 16 L8.5 20 L18 10.5 L14 6.5 Z" fill="#fbc982"/><circle cx="18.5" cy="6.5" r="1.8" fill="#fff"/></svg>
<svg class="a" style="left:11px;top:577px" width="9" height="10" viewBox="0 0 9 10"><path d="M1 1 L4.5 4.3 L8 1 M1 5.5 L4.5 8.8 L8 5.5" fill="none" stroke="#222" stroke-width="1.5"/></svg>
</div>
<!-- ===== VIEWPORT ===== -->
<div id="viewport">
<div class="a" style="left:32px;top:214px;width:795px;height:361px;background:#fff;border-left:1px solid #3a3a3a;border-right:1px solid #3a3a3a;border-bottom:2px solid #666"></div>
<div class="a" style="left:33px;top:214px;width:793px;height:359px;overflow:hidden">
<div class="doc" style="position:absolute;left:-33px;top:-214px;width:843px;height:607px">
<div class="a" style="left:187px;top:248px;font-size:18px;letter-spacing:0.25px;font-weight:bold;color:#000;white-space:nowrap">APPLICATION FORM</div>
<!-- Text2/Text3 -->
<div class="a" style="left:96px;top:331px;width:195px;height:30px;border:2px solid #000;background:#fff"></div>
<div class="a lbl" style="left:178px;top:336px;width:31px;height:19px">Text2</div>
<div class="a" style="left:96px;top:368px;width:195px;height:30px;border:2px solid #000;background:#fff"></div>
<div class="a lbl" style="left:178px;top:373px;width:31px;height:19px">Text3</div>
<!-- sections bg -->
<div class="a" style="left:89px;top:399px;width:327px;height:180px;background:#f1f1f1"></div>
<div class="a" style="left:446px;top:399px;width:326px;height:180px;background:#f1f1f1"></div>
<!-- section left -->
<div class="a t9 b" style="left:95px;top:402.5px">1.</div>
<div class="a t9" style="left:113px;top:402.5px"><b>Your full name</b> (as shown in your passport or travel document)</div>
<div class="a t9" style="left:114px;top:420.5px">Family name</div>
<div class="a box" style="left:174px;top:416px;width:232px;height:24px"></div>
<div class="a lbl2" style="left:251px;top:418px;width:78px;height:19px">ap_fam_name</div>
<div class="a t9" style="left:114px;top:447px">Given name(s)</div>
<div class="a box" style="left:174px;top:443px;width:232px;height:24px"></div>
<div class="a lbl2" style="left:254px;top:445px;width:73px;height:19px">ap_giv_name</div>
<div class="a t9 b" style="left:95px;top:474.5px">2.</div>
<div class="a t9 b" style="left:113px;top:474.5px">Your sex</div>
<div class="a" style="left:205px;top:471px;width:16px;height:15px;background:#2e2e2e;border-radius:2px;border:1px solid #111"></div>
<div class="a" style="left:210px;top:482px;width:6px;height:2px;background:#bbb"></div>
<div class="a t9" style="left:224px;top:474px">Male</div>
<div class="a" style="left:265px;top:471px;width:16px;height:15px;background:#2e2e2e;border-radius:2px;border:1px solid #111"></div>
<div class="a" style="left:270px;top:482px;width:6px;height:2px;background:#bbb"></div>
<div class="a t9" style="left:284px;top:474px">Female</div>
<div class="a t9 b" style="left:95px;top:500px">3.</div>
<div class="a t9 b" style="left:113px;top:500px">Your date of birth</div>
<div class="a" style="left:206px;top:493px;width:107px;height:22px;border:1px solid #222;background:#fff"></div>
<div class="a" style="left:213px;top:494px;font-size:6px;color:#333">Day</div>
<div class="a" style="left:236px;top:494px;font-size:6px;color:#333">Month</div>
<div class="a" style="left:280px;top:494px;font-size:6px;color:#333">Year</div>
<div class="a" style="left:207px;top:500px;width:105px;height:11px;background:#1e1e1e"></div><div class="a" style="left:208px;top:501px;width:22px;height:8px;background:#3a3a3a"></div>
<div class="a" style="left:234px;top:501px;width:22px;height:8px;background:#3a3a3a"></div>
<div class="a" style="left:261px;top:501px;width:50px;height:8px;background:#3a3a3a;overflow:hidden"><div style="position:absolute;left:20px;top:3px;font-size:10px;color:#ddd;letter-spacing:1px">DOB</div></div>
<div class="a" style="left:207px;top:510px;width:105px;height:5px;background:#222"></div>
<div class="a" style="left:207px;top:511px;width:12px;height:3px;background:#fff"></div><div class="a" style="left:220px;top:511px;width:12px;height:3px;background:#fff"></div>
<div class="a" style="left:233px;top:511px;width:12px;height:3px;background:#fff"></div><div class="a" style="left:246px;top:511px;width:12px;height:3px;background:#fff"></div>
<div class="a" style="left:260px;top:511px;width:12px;height:3px;background:#fff"></div><div class="a" style="left:273px;top:511px;width:12px;height:3px;background:#fff"></div>
<div class="a" style="left:286px;top:511px;width:12px;height:3px;background:#fff"></div><div class="a" style="left:299px;top:511px;width:12px;height:3px;background:#fff"></div>
<div class="a t9 b" style="left:95px;top:527px">4.</div>
<div class="a t9 b" style="left:113px;top:527px">Your place of birth</div>
<div class="a t9" style="left:206px;top:528px">Town/City</div>
<div class="a box" style="left:252px;top:520px;width:154px;height:22px"></div>
<div class="a lbl2" style="left:291px;top:522px;width:77px;height:19px;letter-spacing:-0.15px">ap_POB_town</div>
<div class="a t9" style="left:206px;top:554px">Country</div>
<div class="a box" style="left:252px;top:547px;width:154px;height:23px"></div>
<div class="a lbl2" style="left:284px;top:549px;width:91px;height:19px;letter-spacing:-0.2px">ap_POB_country</div>
<!-- section right -->
<div class="a t9 b" style="left:452px;top:405px">12.</div>
<div class="a t9 b" style="left:470px;top:405px">Education</div>
<div class="a t9" style="left:471px;top:421px">How many years of formal education do you have?</div>
<div class="a" style="left:710px;top:415px;width:54px;height:23px;border:1.5px solid #222;background:#fff"></div>
<div class="a t9" style="left:471px;top:438px">What is your highest level of completed education?</div>
<div class="a cb" style="left:470px;top:455px"></div><div class="a t9" style="left:489px;top:458px">No secondary</div>
<div class="a cb" style="left:470px;top:472px"></div><div class="a t9" style="left:489px;top:474px">Secondary</div>
<div class="a cb" style="left:470px;top:489px"></div><div class="a t9" style="left:489px;top:491px">Trade/Apprenticeship</div>
<div class="a cb" style="left:470px;top:504px"></div><div class="a t9" style="left:489px;top:507px">Non-university certificate/diploma</div>
<div class="a cb" style="left:611px;top:455px"></div><div class="a t9" style="left:630px;top:458px">Bachelor's degree</div>
<div class="a cb" style="left:611px;top:472px"></div><div class="a t9" style="left:630px;top:474px">Master's degree</div>
<div class="a cb" style="left:611px;top:489px"></div><div class="a t9" style="left:630px;top:491px">Ph D</div>
<div class="a t9 b" style="left:452px;top:531px">13.</div>
<div class="a t9 b" style="left:470px;top:531px">Your current occupation</div>
<div class="a" style="left:584px;top:526px;width:178px;height:23px;border:1.5px solid #222;background:#fff"></div>
<div class="a t9 b" style="left:452px;top:554px">14.</div>
<div class="a t9 b" style="left:470px;top:554px">Your mailing address (include city and country)</div>
<div class="a" style="left:470px;top:568px;width:293px;height:20px;border:1.5px solid #222;background:#fff"></div>
<div class="a lbl2" style="left:698px;top:561px;width:55px;height:19px;border:1px solid #111">ap_years</div>
<!-- Text1 selected -->
<div class="a" style="left:96px;top:294px;width:195px;height:30px;background:#fff"></div>
<div class="a" style="left:95px;top:293px;width:197px;height:3px;background:repeating-linear-gradient(90deg,#1d6ac8 0 2px,#7fb3ea 2px 3px);border-top:1px solid #1d5fb5"></div>
<div class="a" style="left:95px;top:322px;width:197px;height:3px;background:repeating-linear-gradient(90deg,#1d6ac8 0 2px,#7fb3ea 2px 3px);border-top:1px solid #1d5fb5"></div>
<div class="a" style="left:95px;top:294px;width:3px;height:30px;background:repeating-linear-gradient(0deg,#1d6ac8 0 2px,#7fb3ea 2px 3px)"></div>
<div class="a" style="left:289px;top:294px;width:3px;height:30px;background:repeating-linear-gradient(0deg,#1d6ac8 0 2px,#7fb3ea 2px 3px)"></div>
<div class="a" style="left:178px;top:299px;width:31px;height:19px;background:#3b88d8"></div>
<div class="a" style="left:180px;top:302px;font-size:12px;letter-spacing:-0.3px;color:#111;white-space:nowrap">Text1</div>
<svg class="a" style="left:185.5px;top:301px" width="16" height="16" viewBox="0 0 16 16"><circle cx="8" cy="8" r="6.3" fill="none" stroke="#6a6a6a" stroke-width="1.1"/><circle cx="8" cy="8" r="4.6" fill="none" stroke="#8a8a8a" stroke-width="0.9"/></svg>
<div class="a hd" style="left:91px;top:289px"></div>
<div class="a hd" style="left:188px;top:289px;width:10px"></div>
<div class="a hd" style="left:285px;top:289px"></div>
<div class="a hd hs" style="left:92px;top:305px"></div>
<div class="a hd hs" style="left:286px;top:305px"></div>
<div class="a hd" style="left:91px;top:318px"></div>
<div class="a hd" style="left:188px;top:318px;width:10px"></div>
<div class="a hd" style="left:285px;top:318px"></div>
<div class="a" style="left:75px;top:483px;width:2px;height:1px;background:#333"></div>
<div class="a" style="left:33px;top:214px;width:793px;height:1px;background:#5a5a5a"></div><div class="a" style="left:33px;top:215px;width:793px;height:4px;background:linear-gradient(#9a9a9a,rgba(255,255,255,0))"></div><div class="a" style="left:33px;top:215px;width:3px;height:358px;background:linear-gradient(90deg,#b8b8b8,rgba(255,255,255,0))"></div>
</div></div>
</div>
<!-- ===== SCROLLBAR ===== -->
<div id="scroll">
<div class="a" style="left:827px;top:214px;width:15px;height:361px;background:#efefef"></div>
<svg class="a" style="left:830px;top:219px" width="9" height="6" viewBox="0 0 9 6"><path d="M1 5 L4.5 1.5 L8 5" fill="none" stroke="#444" stroke-width="1.3"/></svg>
<div class="a" style="left:831px;top:229px;width:6px;height:57px;border-radius:3px;background:#8a8a8a"></div>
<svg class="a" style="left:830px;top:564px" width="9" height="6" viewBox="0 0 9 6"><path d="M1 1 L4.5 4.5 L8 1" fill="none" stroke="#444" stroke-width="1.3"/></svg>
</div>
<!-- ===== STATUS BAR ===== -->
<div id="status">
<div class="a" style="left:1px;top:575px;width:841px;height:31px;background:#f3f3f3"></div><div class="grip" style="left:34px;top:579px;height:16px;width:10px"></div><svg class="kk" style="left:35px;top:596px" viewBox="0 0 8 8"><path d="M0.6 0 V8 M6.6 0.6 L3 4 L6.6 7.4" fill="none" stroke="#2a2a2a" stroke-width="1.2"/></svg><div class="grip" style="left:113px;top:579px;height:16px;width:10px"></div><svg class="kk" style="left:114px;top:596px" viewBox="0 0 8 8"><path d="M0.6 0 V8 M6.6 0.6 L3 4 L6.6 7.4" fill="none" stroke="#2a2a2a" stroke-width="1.2"/></svg><div class="grip" style="left:395px;top:579px;height:16px;width:10px"></div><svg class="kk" style="left:396px;top:596px" viewBox="0 0 8 8"><path d="M0.6 0 V8 M6.6 0.6 L3 4 L6.6 7.4" fill="none" stroke="#2a2a2a" stroke-width="1.2"/></svg><div class="grip" style="left:519px;top:579px;height:16px;width:10px"></div><svg class="kk" style="left:520px;top:596px" viewBox="0 0 8 8"><path d="M0.6 0 V8 M6.6 0.6 L3 4 L6.6 7.4" fill="none" stroke="#2a2a2a" stroke-width="1.2"/></svg><div class="grip" style="left:780px;top:579px;height:16px;width:10px"></div><svg class="kk" style="left:781px;top:596px" viewBox="0 0 8 8"><path d="M0.6 0 V8 M6.6 0.6 L3 4 L6.6 7.4" fill="none" stroke="#2a2a2a" stroke-width="1.2"/></svg><svg class="a" style="left:45px;top:578px" width="26" height="26" viewBox="0 0 26 26"><path d="M13.08 6.89 L15.13 7.01 L15.13 8.99 L13.08 9.11 L12.38 10.80 L13.74 12.35 L12.35 13.74 L10.80 12.38 L9.11 13.08 L8.99 15.13 L7.01 15.13 L6.89 13.08 L5.20 12.38 L3.65 13.74 L2.26 12.35 L3.62 10.80 L2.92 9.11 L0.87 8.99 L0.87 7.01 L2.92 6.89 L3.62 5.20 L2.26 3.65 L3.65 2.26 L5.20 3.62 L6.89 2.92 L7.01 0.87 L8.99 0.87 L9.11 2.92 L10.80 3.62 L12.35 2.26 L13.74 3.65 L12.38 5.20 Z" fill="#7d7d7d"/><circle cx="8.0" cy="8.0" r="2.2" fill="#f3f3f3"/><path d="M22.58 15.89 L24.63 16.01 L24.63 17.99 L22.58 18.11 L21.88 19.80 L23.24 21.35 L21.85 22.74 L20.30 21.38 L18.61 22.08 L18.49 24.13 L16.51 24.13 L16.39 22.08 L14.70 21.38 L13.15 22.74 L11.76 21.35 L13.12 19.80 L12.42 18.11 L10.37 17.99 L10.37 16.01 L12.42 15.89 L13.12 14.20 L11.76 12.65 L13.15 11.26 L14.70 12.62 L16.39 11.92 L16.51 9.87 L18.49 9.87 L18.61 11.92 L20.30 12.62 L21.85 11.26 L23.24 12.65 L21.88 14.20 Z" fill="#f5a623"/><circle cx="17.5" cy="17.0" r="2.2" fill="#f3f3f3"/></svg><svg class="a" style="left:75px;top:588px" width="9" height="6" viewBox="0 0 9 6"><path d="M1 1 L4.5 4.5 L8 1" fill="none" stroke="#222" stroke-width="1.5"/></svg><svg class="a" style="left:126px;top:579px" width="23" height="23" viewBox="0 0 23 23"><circle cx="11.5" cy="11.5" r="10.5" fill="#f7f7f7" stroke="#a8a8a8" stroke-width="1"/><path d="M8 7 V16 M15 7 L10.5 11.5 L15 16" fill="none" stroke="#8ccaf5" stroke-width="2"/></svg><svg class="a" style="left:154px;top:579px" width="23" height="23" viewBox="0 0 23 23"><circle cx="11.5" cy="11.5" r="10.5" fill="#f7f7f7" stroke="#a8a8a8" stroke-width="1"/><path d="M13.5 7 L9 11.5 L13.5 16" fill="none" stroke="#8ccaf5" stroke-width="2"/></svg><div class="a" style="left:180px;top:578px;width:96px;height:23px;background:#fff;border:1px solid #c5c5c5;border-radius:3px"></div><div class="a" style="left:253px;top:582px;font-size:13px;color:#1b1b1b">1</div><svg class="a" style="left:259px;top:580px" width="8" height="19" viewBox="0 0 8 19"><path d="M7 1 L1 18" stroke="#222" stroke-width="1.1"/></svg><div class="a" style="left:265px;top:579px;font-size:10.5px;color:#1b1b1b">2</div><svg class="a" style="left:280px;top:579px" width="23" height="23" viewBox="0 0 23 23"><circle cx="11.5" cy="11.5" r="10.5" fill="#f7f7f7" stroke="#8a8a8a" stroke-width="1"/><path d="M9.5 7 L14 11.5 L9.5 16" fill="none" stroke="#3a96e6" stroke-width="2"/></svg><svg class="a" style="left:307px;top:579px" width="23" height="23" viewBox="0 0 23 23"><circle cx="11.5" cy="11.5" r="10.5" fill="#f7f7f7" stroke="#8a8a8a" stroke-width="1"/><path d="M8 7 L12.5 11.5 L8 16 M15 7 V16" fill="none" stroke="#3a96e6" stroke-width="2"/></svg><div class="sep" style="left:334px;top:578px;height:26px;background:#d0d0d0"></div><svg class="a" style="left:338px;top:579px" width="23" height="23" viewBox="0 0 23 23"><circle cx="11.5" cy="11.5" r="10.5" fill="#f7f7f7" stroke="#8a8a8a" stroke-width="1"/><path d="M6 11.5 H17 M10.5 7 L6 11.5 L10.5 16" fill="none" stroke="#6ab04c" stroke-width="2"/></svg><svg class="a" style="left:366px;top:579px" width="23" height="23" viewBox="0 0 23 23"><circle cx="11.5" cy="11.5" r="10.5" fill="#f7f7f7" stroke="#b0b0b0" stroke-width="1"/><path d="M6 11.5 H17 M12.5 7 L17 11.5 L12.5 16" fill="none" stroke="#aad68a" stroke-width="2"/></svg><div class="a" style="left:405px;top:576px;width:28px;height:28px;background:#e6d4a6;border:1px solid #cdbb8c;border-radius:3px"></div><svg class="a" style="left:410px;top:579px" width="18" height="22" viewBox="0 0 18 22"><path d="M1.5 1.5 H12 L16.5 6 V20.5 H1.5 Z" fill="#fff" stroke="#333" stroke-width="1"/><path d="M12 1.5 L16.5 6 L12.5 5.5 Z" fill="#333"/></svg><svg class="a" style="left:438px;top:579px" width="18" height="23" viewBox="0 0 18 23">
<path d="M1.5 0.5 V8 Q1.5 9.5 3 9.5 H15 Q16.5 9.5 16.5 8 V0.5" fill="#fff" stroke="#666" stroke-width="1"/><path d="M1.5 1 H16.5" stroke="#bbb" stroke-width="1" stroke-dasharray="1 1"/>
<path d="M1.5 22 V14 Q1.5 12.5 3 12.5 H12 L16.5 17 V22" fill="#fff" stroke="#666" stroke-width="1"/><path d="M12 12.5 L16.5 17 L13 16.5 Z" fill="#555"/><path d="M1.5 22 H16.5" stroke="#bbb" stroke-width="1" stroke-dasharray="1 1"/>
</svg><svg class="a" style="left:462px;top:582px" width="27" height="18" viewBox="0 0 27 18">
<path d="M1.5 2.5 Q1.5 1.5 2.5 1.5 H8 L12.5 6 V15.5 Q12.5 16.5 11.5 16.5 H2.5 Q1.5 16.5 1.5 15.5 Z M14.5 2.5 Q14.5 1.5 15.5 1.5 H21 L25.5 6 V15.5 Q25.5 16.5 24.5 16.5 H15.5 Q14.5 16.5 14.5 15.5 Z" fill="#fff" stroke="#666" stroke-width="1"/>
<path d="M8 1.5 L12.5 6 L9 5.5 Z M21 1.5 L25.5 6 L22 5.5 Z" fill="#555"/>
</svg><svg class="a" style="left:490px;top:579px" width="27" height="23" viewBox="0 0 27 23">
<path d="M1.5 0.5 V8 Q1.5 9.5 3 9.5 H10 Q11.5 9.5 11.5 8 V0.5 M14.5 0.5 V8 Q14.5 9.5 16 9.5 H23 Q24.5 9.5 24.5 8 V0.5" fill="#fff" stroke="#666" stroke-width="1"/>
<path d="M1.5 22 V14 Q1.5 12.5 3 12.5 H7.5 L11.5 16.5 V22 M14.5 22 V14 Q14.5 12.5 16 12.5 H20.5 L24.5 16.5 V22" fill="#fff" stroke="#666" stroke-width="1"/>
<path d="M7.5 12.5 L11.5 16.5 L8 16 Z M20.5 12.5 L24.5 16.5 L21 16 Z" fill="#555"/>
</svg><div class="a" style="left:531px;top:578px;width:82px;height:24px;background:#fff;border:1px solid #c5c5c5;border-radius:3px"></div><div class="a" style="left:535px;top:583px;font-size:12.5px;color:#1b1b1b;letter-spacing:-0.3px">97.3%</div><svg class="a" style="left:599px;top:588px" width="9" height="6" viewBox="0 0 9 6"><path d="M1 1 L4.5 4.5 L8 1" fill="none" stroke="#222" stroke-width="1.5"/></svg><div class="sep" style="left:618px;top:578px;height:26px;background:#d0d0d0"></div><svg class="a" style="left:620px;top:579px" width="23" height="23" viewBox="0 0 23 23"><circle cx="11.5" cy="11.5" r="10.5" fill="#f7f7f7" stroke="#8a8a8a" stroke-width="1"/><path d="M5.5 11.5 H17.5" stroke="#3a96e6" stroke-width="2"/></svg><div class="a" style="left:647px;top:589px;width:49px;height:3px;border-radius:2px;background:#8a8a8a"></div><div class="a" style="left:696px;top:589px;width:51px;height:3px;border-radius:2px;background:#c2c2c2"></div><svg class="a" style="left:685px;top:580px" width="21" height="21" viewBox="0 0 21 21"><circle cx="10.5" cy="10.5" r="9.5" fill="#f7f7f7" stroke="#555" stroke-width="1"/><circle cx="10.5" cy="10.5" r="3.3" fill="#8a8a8a"/><path d="M10.5 6 V15" stroke="#8a8a8a" stroke-width="1"/></svg><svg class="a" style="left:752px;top:579px" width="23" height="23" viewBox="0 0 23 23"><circle cx="11.5" cy="11.5" r="10.5" fill="#f7f7f7" stroke="#8a8a8a" stroke-width="1"/><path d="M5.5 11.5 H17.5 M11.5 5.5 V17.5" stroke="#3a96e6" stroke-width="2"/></svg><svg class="a" style="left:796px;top:585px" width="17" height="13" viewBox="0 0 17 13"><rect x="0.5" y="0.5" width="16" height="12" fill="#fff" stroke="#aaa" stroke-width="1"/><rect x="5" y="2.5" width="6.5" height="8" fill="#8cc4ee"/><path d="M1.5 3 H3.5 M1.5 5 H3.5 M1.5 7 H3.5 M1.5 9 H3.5 M13 3 H15 M13 5 H15" stroke="#999" stroke-width="0.8"/></svg><svg class="a" style="left:821px;top:588px" width="9" height="6" viewBox="0 0 9 6"><path d="M1 1 L4.5 4.5 L8 1" fill="none" stroke="#aaa" stroke-width="1.5"/></svg><div class="a" style="left:831px;top:575px;width:11px;height:31px;background:#e8e8e8"></div><svg class="a" style="left:832px;top:576px" width="9" height="9" viewBox="0 0 9 9"><path d="M1 1 L4.5 4.5 L8 1" fill="none" stroke="#333" stroke-width="1.2"/><path d="M0.5 7.5 H8.5" stroke="#333" stroke-width="1"/></svg>
</div>
<svg class="a" style="left:0;top:0;z-index:50" width="10" height="10" viewBox="0 0 10 10"><path d="M0 0 H10 V0.5 A9.5 9.5 0 0 0 0.5 10 H0 Z" fill="#fff"/><path d="M10 0.5 A9.5 9.5 0 0 0 0.5 10" fill="none" stroke="#bdbdbd" stroke-width="1"/></svg>
<svg class="a" style="left:833px;top:0;z-index:50" width="10" height="10" viewBox="0 0 10 10"><path d="M10 0 H0 V0.5 A9.5 9.5 0 0 1 9.5 10 H10 Z" fill="#fff"/><path d="M0 0.5 A9.5 9.5 0 0 1 9.5 10" fill="none" stroke="#bdbdbd" stroke-width="1"/></svg>
<svg class="a" style="left:0;top:597px;z-index:50" width="10" height="10" viewBox="0 0 10 10"><path d="M0 10 H10 V9.5 A9.5 9.5 0 0 1 0.5 0 H0 Z" fill="#fff"/><path d="M10 9.5 A9.5 9.5 0 0 1 0.5 0" fill="none" stroke="#bdbdbd" stroke-width="1"/></svg>
<svg class="a" style="left:833px;top:597px;z-index:50" width="10" height="10" viewBox="0 0 10 10"><path d="M10 10 H0 V9.5 A9.5 9.5 0 0 0 9.5 0 H10 Z" fill="#fff"/><path d="M0 9.5 A9.5 9.5 0 0 0 9.5 0" fill="none" stroke="#bdbdbd" stroke-width="1"/></svg>
<div class="a" style="left:0;top:0;width:843px;height:607px;border:1px solid #bdbdbd;border-radius:10px;z-index:49;pointer-events:none"></div>
</body></html>
